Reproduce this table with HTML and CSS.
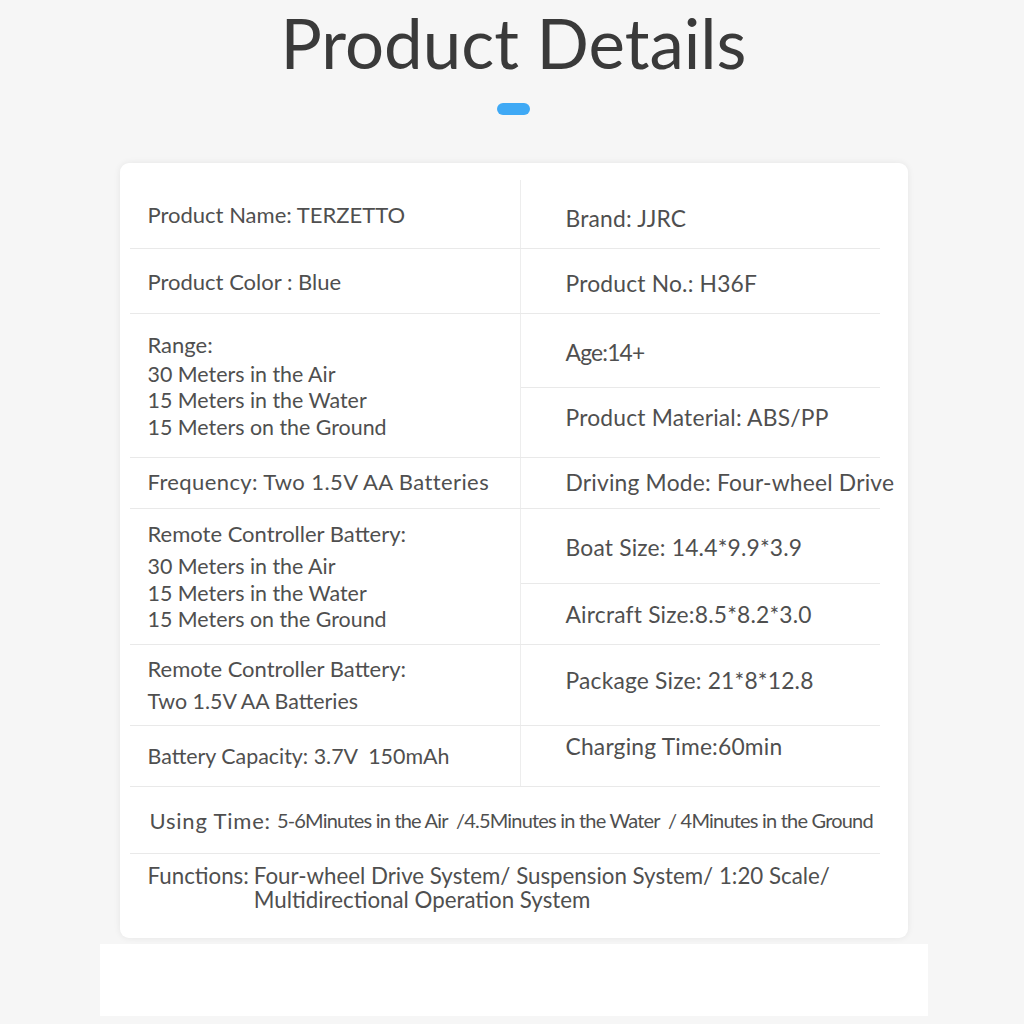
FILE: index.html
```html
<!DOCTYPE html>
<html lang="en">
<head>
<meta charset="utf-8">
<title>Product Details</title>
<link rel="stylesheet" href="styles.css">
</head>
<body>
<main class="page">
  <header class="header">
    <h1 class="title">Product Details</h1>
    <div class="accent"></div>
  </header>

  <section class="card">
    <div class="spec-row row-a">
      <div class="cell left"><span class="txt">Product Name: TERZETTO</span></div>
      <div class="cell right"><div class="sub sub-fill"><span class="rtxt shift-down4">Brand: JJRC</span></div></div>
    </div>

    <div class="spec-row row-b">
      <div class="cell left"><span class="txt">Product Color : Blue</span></div>
      <div class="cell right"><div class="sub sub-fill"><span class="rtxt shift-down2">Product No.: H36F</span></div></div>
    </div>

    <div class="spec-row row-c">
      <div class="cell left">
        <div class="txt label-gap-s">Range:</div>
        <div class="txt lines">30 Meters in the Air<br>15 Meters in the Water<br>15 Meters on the Ground</div>
      </div>
      <div class="cell right">
        <div class="sub sub-age"><span class="rtxt narrow shift-down2">Age:14+</span></div>
        <div class="sub sub-mat"><span class="rtxt shift-up5">Product Material: ABS/PP</span></div>
      </div>
    </div>

    <div class="spec-row row-d">
      <div class="cell left"><span class="txt wide shift-up2">Frequency: Two 1.5V AA Batteries</span></div>
      <div class="cell right"><div class="sub sub-fill"><span class="rtxt shift-up1">Driving Mode: Four-wheel Drive</span></div></div>
    </div>

    <div class="spec-row row-e">
      <div class="cell left">
        <div class="txt label-gap-l">Remote Controller Battery:</div>
        <div class="txt lines">30 Meters in the Air<br>15 Meters in the Water<br>15 Meters on the Ground</div>
      </div>
      <div class="cell right">
        <div class="sub sub-boat"><span class="rtxt shift-down1">Boat Size: 14.4*9.9*3.9</span></div>
        <div class="sub sub-air"><span class="rtxt">Aircraft Size:8.5*8.2*3.0</span></div>
      </div>
    </div>

    <div class="spec-row row-f">
      <div class="cell left">
        <div class="txt label-gap-l">Remote Controller Battery:</div>
        <div class="txt lines">Two 1.5V AA Batteries</div>
      </div>
      <div class="cell right"><div class="sub sub-fill"><span class="rtxt shift-up5">Package Size: 21*8*12.8</span></div></div>
    </div>

    <div class="spec-row row-g">
      <div class="cell left"><span class="txt lines">Battery Capacity: 3.7V&nbsp; 150mAh</span></div>
      <div class="cell right"><div class="sub sub-fill"><span class="rtxt shift-up10">Charging Time:60min</span></div></div>
    </div>

    <div class="spec-row row-h">
      <div class="cell full">
        <span class="using-label">Using Time:</span>
        <span class="using-value">5-6Minutes in the Air &nbsp;/4.5Minutes in the Water &nbsp;/ 4Minutes in the Ground</span>
      </div>
    </div>

    <div class="spec-row row-i">
      <div class="cell full functions">
        <span class="fn-label">Functions:</span>
        <span class="fn-value">Four-wheel Drive System/ Suspension System/ 1:20 Scale/<br>Multidirectional Operation System</span>
      </div>
    </div>
  </section>

  <div class="footer-box"></div>
</main>
</body>
</html>
```

FILE: styles.css
```css
html, body {
  margin: 0;
  padding: 0;
}

body {
  background: #f6f6f6;
  font-family: "Lato", "Noto Sans", sans-serif;
  color: #4f4f4f;
}

.page {
  padding-left: 3px;
  padding-top: 1px;
}

.header {
  display: flex;
  flex-direction: column;
  align-items: center;
}

.title {
  margin: 0;
  font-family: "Lato", "Noto Sans", sans-serif;
  font-weight: 400;
  font-size: 69px;
  line-height: 84px;
  color: #3a3a3a;
}

.accent {
  width: 33px;
  height: 12px;
  border-radius: 6px;
  background: #3fa9f5;
  margin-top: 18px;
}

.card {
  box-sizing: border-box;
  width: 788px;
  height: 775px;
  margin: 48px auto 0;
  background: #ffffff;
  border-radius: 9px;
  box-shadow: 0 0 7px rgba(0, 0, 0, 0.07);
  padding: 17px 28px 0 10px;
}

.spec-row {
  display: grid;
  grid-template-columns: 390px 360px;
  border-bottom: 1px solid #e9e9e9;
}

.row-a { height: 68px; }
.row-b { height: 64px; }
.row-c { height: 143px; }
.row-d { height: 50px; }
.row-e { height: 135px; }
.row-f { height: 80px; }
.row-g { height: 60px; }
.row-h { height: 66px; grid-template-columns: 750px; }
.row-i { grid-template-columns: 750px; border-bottom: none; }

.cell.left {
  display: flex;
  flex-direction: column;
  justify-content: center;
  padding-left: 18px;
}

.cell.right {
  display: flex;
  flex-direction: column;
  border-left: 1px solid #ededed;
}

.sub {
  display: flex;
  align-items: center;
  padding-left: 45px;
}

.sub-fill { flex: 1; }
.sub-age { height: 73px; border-bottom: 1px solid #e9e9e9; }
.sub-mat { height: 69px; }
.sub-boat { height: 74px; border-bottom: 1px solid #e9e9e9; }
.sub-air { height: 60px; }

.txt {
  font-size: 22px;
  line-height: 27px;
  letter-spacing: 0;
  white-space: nowrap;
}

.txt.lines {
  font-size: 21.4px;
  line-height: 26.5px;
}

.txt.wide {
  letter-spacing: 0.4px;
}

.label-gap-s { margin-bottom: 3px; }
.label-gap-l { margin-bottom: 6px; }

.rtxt {
  font-size: 22.8px;
  line-height: 27px;
  letter-spacing: 0.2px;
  white-space: nowrap;
}

.rtxt.narrow {
  letter-spacing: -0.8px;
}

.shift-down1 { position: relative; top: 1px; }
.shift-down2 { position: relative; top: 2px; }
.shift-down4 { position: relative; top: 4px; }
.shift-up1 { position: relative; top: -1px; }
.shift-up2 { position: relative; top: -2px; }
.shift-up5 { position: relative; top: -5px; }
.shift-up10 { position: relative; top: -10px; }

.cell.full {
  display: flex;
  align-items: center;
  padding-left: 20px;
  white-space: nowrap;
}

.using-label {
  font-size: 22px;
  letter-spacing: 0.8px;
  margin-right: 6px;
}

.using-value {
  font-size: 20px;
  letter-spacing: -0.8px;
}

.cell.functions {
  align-items: flex-start;
  padding-left: 18px;
  padding-top: 10px;
  font-size: 22.3px;
  line-height: 24px;
  letter-spacing: 0;
}

.fn-label {
  margin-right: 5px;
}

.footer-box {
  width: 828px;
  height: 72px;
  margin: 6px auto 0;
  background: #ffffff;
}
```
